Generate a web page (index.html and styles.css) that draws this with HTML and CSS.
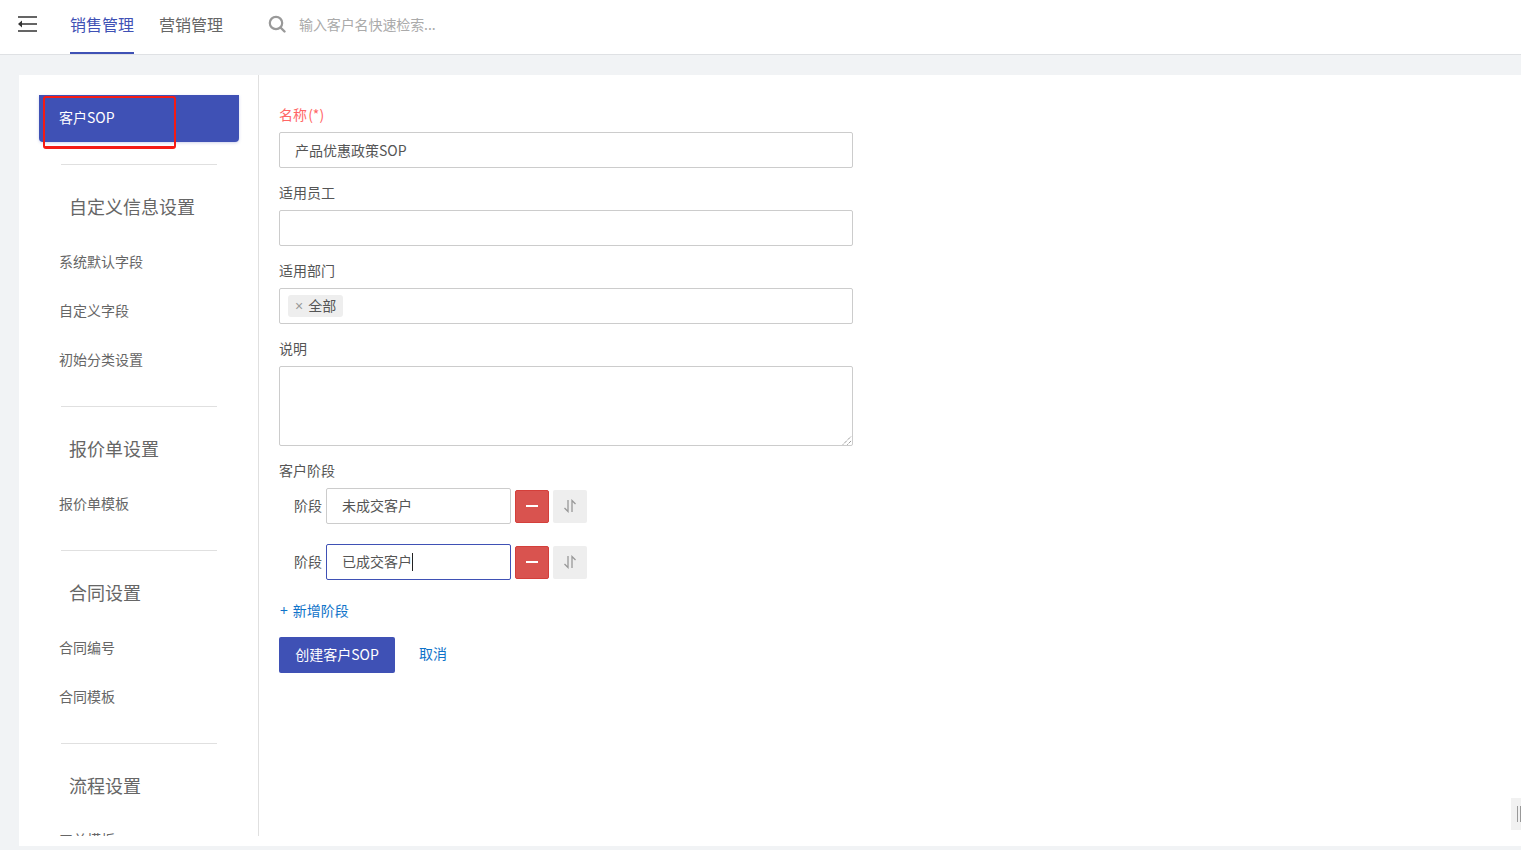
FILE: index.html
```html
<!DOCTYPE html>
<html lang="zh-CN">
<head>
<meta charset="utf-8">
<title>客户SOP</title>
<link rel="stylesheet" href="styles.css">
</head>
<body>
<header class="topbar">
  <svg class="menu-icon" width="20" height="16" viewBox="0 0 20 16"><path d="M1 1h19M5 8h15M1 15h19" stroke="#333" stroke-width="1.500" fill="none"/><path d="M1 8l4-3.500v7z" fill="#333"/></svg>
  <nav class="tabs">
    <a class="tab tab-active">销售管理</a>
    <a class="tab">营销管理</a>
  </nav>
  <div class="search">
    <svg width="18" height="18" viewBox="0 0 18 18"><circle cx="8" cy="8" r="6.2" stroke="#999" stroke-width="2.2" fill="none"/><path d="M12.5 12.5l4 4" stroke="#999" stroke-width="2.4" stroke-linecap="round"/></svg>
    <span class="search-text">输入客户名快速检索...</span>
  </div>
</header>
<main class="page">
  <div class="panel">
    <aside class="sidebar">
      <div class="active-item">客户SOP</div>
      <div class="highlight-box"></div>
      <hr class="divider divider-first">
      <h3 class="group-title">自定义信息设置</h3>
      <a class="side-item">系统默认字段</a>
      <a class="side-item">自定义字段</a>
      <a class="side-item">初始分类设置</a>
      <hr class="divider">
      <h3 class="group-title">报价单设置</h3>
      <a class="side-item">报价单模板</a>
      <hr class="divider">
      <h3 class="group-title">合同设置</h3>
      <a class="side-item">合同编号</a>
      <a class="side-item">合同模板</a>
      <hr class="divider">
      <h3 class="group-title">流程设置</h3>
      <a class="side-item side-item-clipped">工单模板</a>
    </aside>
    <section class="form">
      <label class="field-label required">名称 (*)</label>
      <div class="input">产品优惠政策SOP</div>
      <label class="field-label">适用员工</label>
      <div class="input"></div>
      <label class="field-label">适用部门</label>
      <div class="input input-tags"><span class="tag"><span class="tag-x">×</span>全部</span></div>
      <label class="field-label">说明</label>
      <div class="textarea">
        <svg class="resize" width="10" height="10" viewBox="0 0 10 10"><path d="M1 9.500L9.500 1M5.500 9.500L9.500 5.500" stroke="#666" stroke-width="1" stroke-dasharray="1 1" fill="none"/></svg>
      </div>
      <label class="field-label">客户阶段</label>
      <div class="stage">
        <span class="stage-label">阶段</span>
        <div class="input stage-input">未成交客户</div>
        <button class="btn-minus"><span class="minus"></span></button>
        <button class="btn-sort"><svg width="14" height="14" viewBox="0 0 14 14"><path d="M5 1v11.500L1.500 9M9 13V1.500L12.500 5" stroke="#999" stroke-width="1.300" fill="none"/></svg></button>
      </div>
      <div class="stage">
        <span class="stage-label">阶段</span>
        <div class="input stage-input stage-focus">已成交客户<span class="caret"></span></div>
        <button class="btn-minus"><span class="minus"></span></button>
        <button class="btn-sort"><svg width="14" height="14" viewBox="0 0 14 14"><path d="M5 1v11.500L1.500 9M9 13V1.500L12.500 5" stroke="#999" stroke-width="1.300" fill="none"/></svg></button>
      </div>
      <a class="add-stage"><span class="plus">+</span>新增阶段</a>
      <div class="actions">
        <button class="btn-primary">创建客户SOP</button>
        <a class="cancel">取消</a>
      </div>
    </section>
  </div>
  <div class="collapse-handle"><span class="bar-a"></span><span class="bar-b"></span></div>
</main>
</body>
</html>
```
FILE: styles.css
```css
* { box-sizing: border-box; }
html, body { margin: 0; padding: 0; height: 100%; overflow: hidden; }
body {
  font-family: "Noto Sans CJK SC", "Noto Sans", sans-serif;
  font-size: 14px;
  color: #555;
  background: #f1f3f5;
  display: flex;
  flex-direction: column;
  height: 850px;
}
.topbar {
  height: 55px;
  flex: none;
  background: #fff;
  border-bottom: 1px solid #dfe1e4;
  display: flex;
  align-items: center;
  padding-left: 17px;
}
.menu-icon { flex: none; margin-bottom: 6px; }
.tabs { display: flex; margin-left: 33px; gap: 25px; height: 54px; }
.tab {
  font-size: 16px;
  line-height: 48px;
  height: 54px;
  color: #666;
  width: 64px;
  white-space: nowrap;
}
.tab-active { color: #3f51b5; border-bottom: 2px solid #3f51b5; }
.search { display: flex; align-items: center; margin-left: 45px; margin-bottom: 6px; }
.search-text { font-size: 14px; letter-spacing: -.1px; color: #aaa; margin-left: 13px; }
.page {
  position: relative;
  flex: 1;
  padding: 20px 0 4px 19px;
  min-height: 0;
}
.panel {
  background: #fff;
  height: 100%;
  display: flex;
  align-items: flex-start;
}
.sidebar {
  position: relative;
  width: 240px;
  flex: none;
  height: 761px;
  overflow: hidden;
  border-right: 1px solid #e0e0e0;
  padding: 20px 0 0 20px;
}
.active-item {
  width: 200px;
  height: 47px;
  padding: 11px 0 0 20px;
  line-height: 22px;
  background: #3f51b5;
  color: #fff;
  border-radius: 0 0 4px 4px;
  box-shadow: 0 1px 3px rgba(63,81,181,.25);
}
.highlight-box {
  position: absolute;
  left: 24px;
  top: 21px;
  width: 133px;
  height: 53px;
  border: 2px solid #f51b14;
  border-bottom-width: 3px;
  border-radius: 3px;
}
.divider {
  border: 0;
  border-top: 1px solid #e0e0e0;
  margin: 28px 0 0 22px;
  width: 156px;
  height: 0;
}
.divider-first { margin-top: 22px; }
.group-title {
  margin: 26px 0 30px 30px;
  font-size: 18px;
  font-weight: 400;
  line-height: 30px;
  color: #666;
}
.side-item {
  display: block;
  height: 49px;
  line-height: 20px;
  color: #666;
  margin-left: 20px;
}
.side-item + .divider { margin-top: 8px; }
.side-item-clipped { margin-top: -1px; }
.form { flex: none; width: 574px; margin-left: 20px; padding-top: 30px; }
.field-label {
  display: block;
  line-height: 18px;
  height: 27px;
  margin-top: 15px;
  color: #555;
  word-spacing: -2px;
}
.form > .field-label:first-child { margin-top: 0; }
.required { color: #f66; }
.input {
  height: 36px;
  border: 1px solid #ccc;
  border-radius: 2px;
  padding: 0 15px;
  line-height: 35px;
  color: #555;
  background: #fff;
}
.input-tags { padding: 6px 8px; display: flex; }
.tag {
  display: flex;
  align-items: center;
  height: 22px;
  padding: 0 7px 2px;
  background: #eee;
  border-radius: 3px;
  line-height: 20px;
}
.tag-x { font-family: "Liberation Sans", sans-serif; color: #999; font-size: 14px; margin: 2px 5px 0 0; }
.textarea {
  position: relative;
  height: 80px;
  border: 1px solid #ccc;
  border-radius: 2px;
}
.resize { position: absolute; right: 0; bottom: 0; }
.stage { display: flex; align-items: center; margin-bottom: 20px; }
.stage-label { margin: 0 0 2px 15px; width: 32px; text-align: left; }
.stage-input { width: 185px; flex: none; line-height: 33px; }
.stage-focus { border-color: #3f51b5; }
.caret {
  display: inline-block;
  width: 1px;
  height: 18px;
  background: #222;
  vertical-align: -4px;
}
.btn-minus, .btn-sort {
  width: 34px;
  height: 33px;
  padding: 0;
  display: flex;
  align-items: center;
  justify-content: center;
  border-radius: 2px;
}
.btn-minus { margin-left: 4px; background: #d9534f; border: 1px solid #d43f3a; }
.minus { width: 12px; height: 2px; background: #fff; }
.btn-sort { margin-left: 4px; background: #eee; border: 0; }
.add-stage {
  display: block;
  line-height: 20px;
  color: #0f73c9;
}
.plus { margin: 0 5px 0 1px; }
.actions { display: flex; align-items: center; margin-top: 17px; }
.btn-primary {
  width: 116px;
  height: 36px;
  border: 0;
  border-radius: 2px;
  padding: 0 0 2px;
  background: #3f51b5;
  color: #fff;
  font: inherit;
}
.cancel { margin-left: 24px; color: #0f73c9; margin-bottom: 4px; }
.collapse-handle {
  position: absolute;
  right: 0;
  top: 743px;
  width: 10px;
  height: 32px;
  background: #f1f1f1;
}
.collapse-handle span {
  position: absolute;
  top: 8px;
  width: 1px;
  height: 16px;
  background: #999;
}
.collapse-handle .bar-a { left: 6px; }
.collapse-handle .bar-b { left: 9px; }
```
